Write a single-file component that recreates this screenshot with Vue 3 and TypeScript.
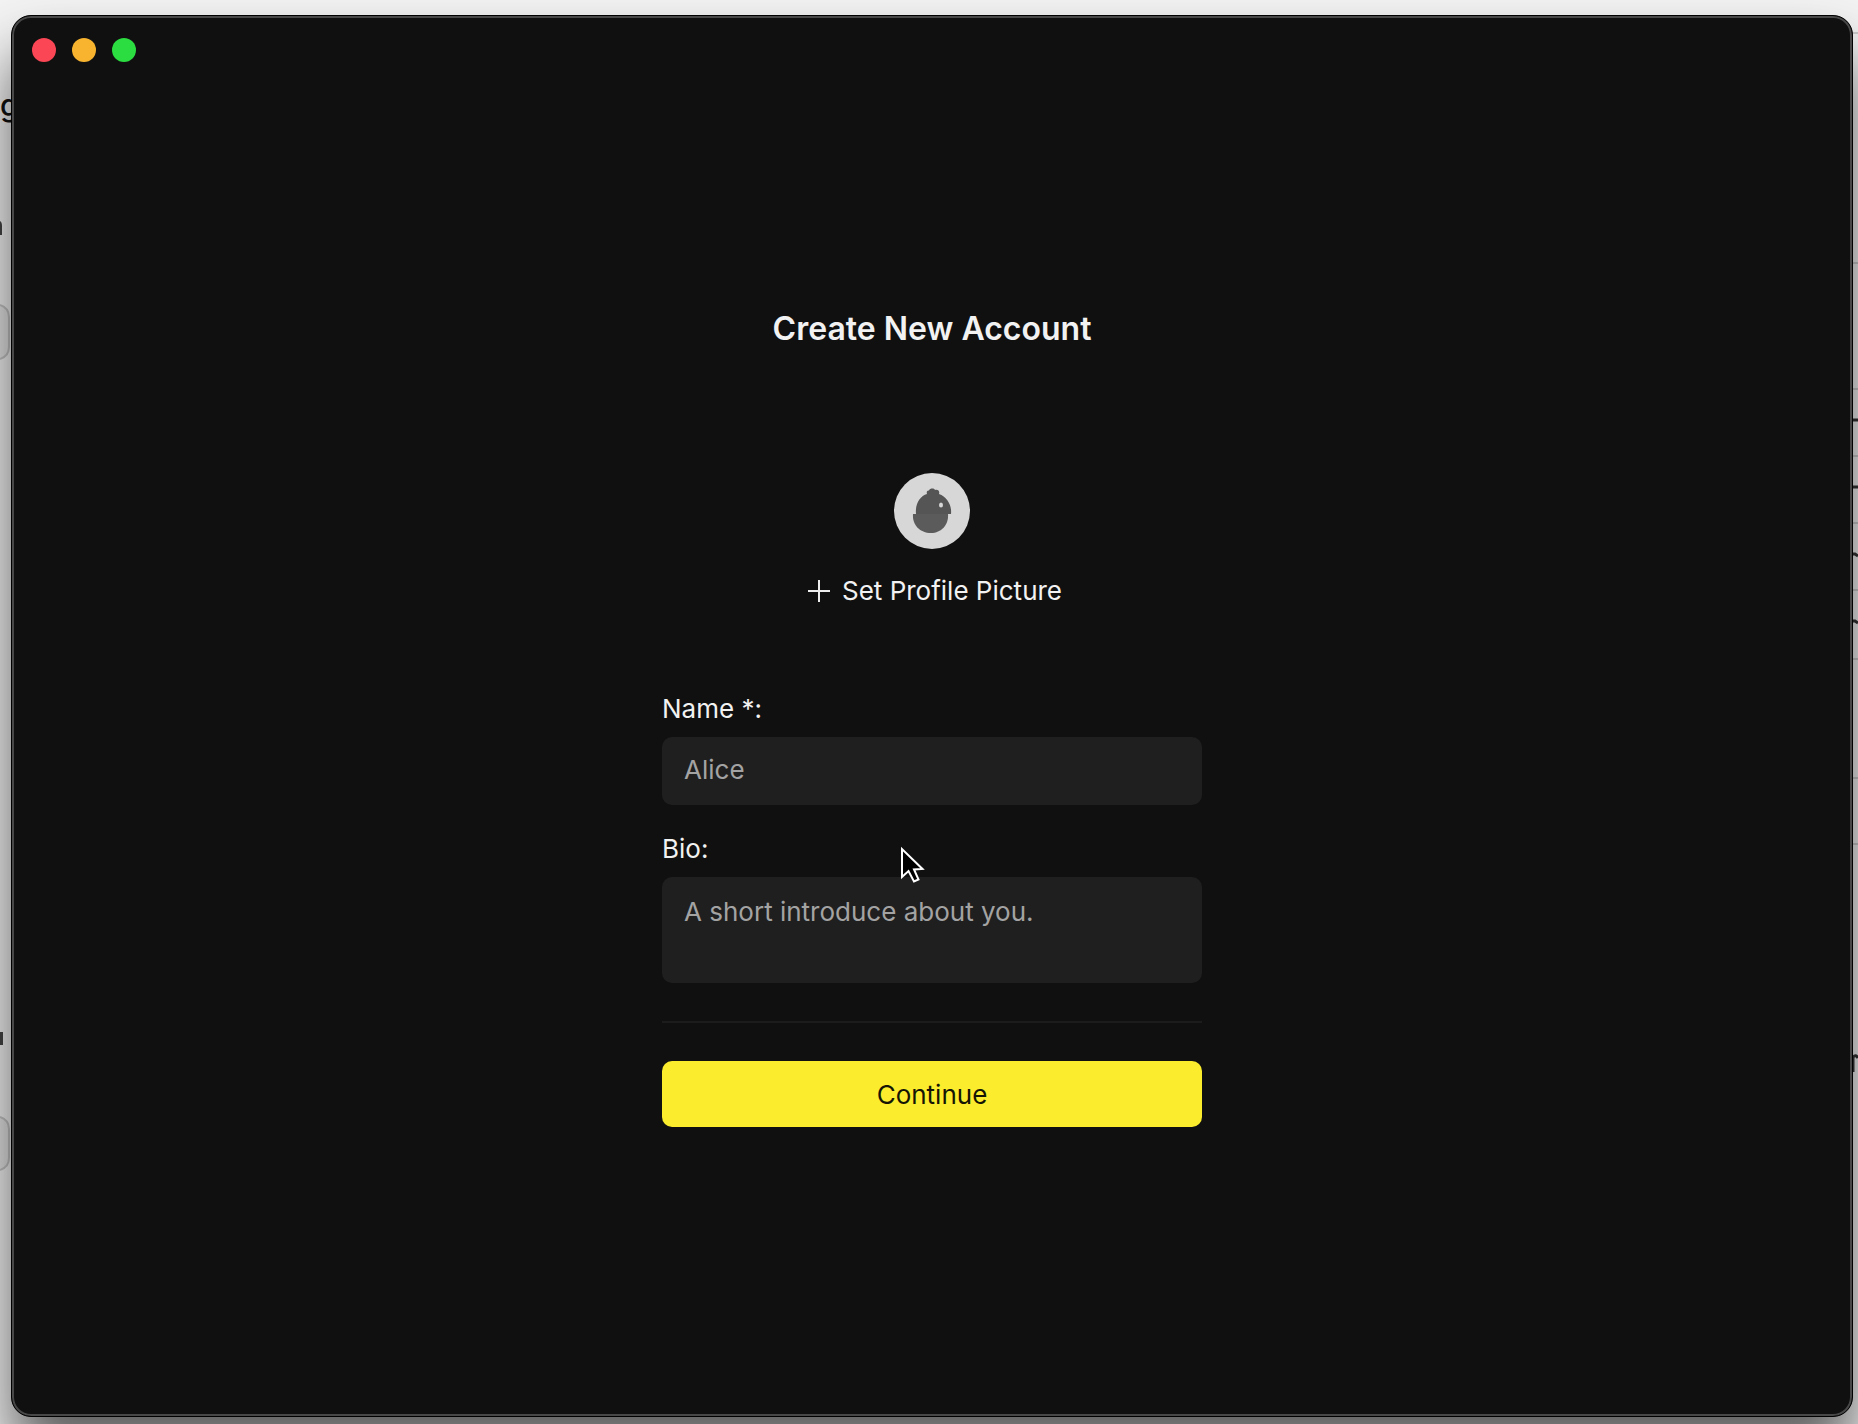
<script setup lang="ts">
import { ref } from 'vue'

const name = ref('')
const bio = ref('')
const lights: { label: string; tone: string }[] = [
  { label: 'Close', tone: 'close' },
  { label: 'Minimize', tone: 'minimize' },
  { label: 'Zoom', tone: 'zoom' },
]
const rules: number[] = [33, 263, 389, 456, 523, 590, 659, 778, 844]
const strokes: number[] = [420, 487]
const hooks: number[] = [554, 621]
</script>

<template>
  <div class="desktop">
    <svg class="behind left" width="20" height="1424" aria-hidden="true">
      <text x="0" y="116" font-size="30" font-weight="500" fill="#111">g</text>
      <path d="M0 221q2 1 2 5v9H0zM0 1032h3v13H0z" fill="#444" />
      <path d="M0 305q9 3 9 12v30q0 9-9 12M0 1117q9 3 9 12v29q0 9-9 12" fill="#e6e6e6" stroke="#c4c4c4" stroke-width="2" />
    </svg>
    <svg class="behind right" width="6" height="1424" aria-hidden="true">
      <path v-for="y in rules" :key="y" :d="`M0 ${y}h6`" stroke="#ccc" stroke-width="2" />
      <path v-for="y in strokes" :key="y" :d="`M0 ${y}h6`" stroke="#333" stroke-width="3" />
      <path v-for="y in hooks" :key="y" :d="`M0 ${y}h3l3 2`" fill="none" stroke="#333" stroke-width="3" />
      <path d="M1 1072v-15q3-3 5 1" fill="none" stroke="#333" stroke-width="3" />
    </svg>

    <main class="window">
      <header class="titlebar">
        <button v-for="l in lights" :key="l.tone" type="button" class="light" :class="l.tone" :aria-label="l.label"></button>
      </header>

      <form class="account" @submit.prevent>
        <h1>Create New Account</h1>
        <svg class="avatar" width="76" height="76" viewBox="0 0 76 76" role="img" aria-label="Profile picture">
          <circle cx="38" cy="38" r="38" fill="#d7d7d7" />
          <path d="M22 41C21 31 26 23 33 21C32 18 34 17 35 17.500C36 15 40 15 41 17C44 16 46 18 45 21C53 24 58 32 57 41Z" fill="#555" />
          <path d="M19 41H54C55 52 47 60 37 60C26 60 18 52 19 41Z" fill="#5b5b5b" />
          <ellipse cx="47" cy="32" rx="2" ry="2.500" fill="#d7d7d7" />
        </svg>
        <button type="button" class="picture">
          <svg width="22" height="22" viewBox="0 0 22 22" aria-hidden="true">
            <path d="M11 0V22M0 11H22" stroke="#eee" stroke-width="2" />
          </svg>
          Set Profile Picture
        </button>

        <label for="name">Name *:</label>
        <input id="name" v-model="name" type="text" placeholder="Alice" />
        <label for="bio">Bio:</label>
        <textarea id="bio" v-model="bio" placeholder="A short introduce about you."></textarea>
        <hr />
        <button type="submit" class="continue">Continue</button>
      </form>
    </main>

    <svg class="cursor" width="26" height="40" viewBox="0 0 26 40" aria-hidden="true">
      <path d="M2 3V31L8.500 25L14 35.500L18.500 33.500L14 23.500L22.500 23Z" fill="#000" stroke="#fff" stroke-width="2" />
    </svg>
  </div>
</template>

<style>
body {
  margin: 0;
}
</style>

<style scoped>
.desktop {
  position: relative;
  box-sizing: border-box;
  display: flex;
  min-height: 100vh;
  padding: 15px 5px 7px 11px;
  overflow: hidden;
  background: #f3f3f3;
  font-family: Inter, "Liberation Sans", sans-serif;
}

.behind {
  position: absolute;
  top: 0;
}

.left {
  left: 0;
}

.right {
  right: 0;
}

.window {
  position: relative;
  box-sizing: border-box;
  display: grid;
  grid-template-rows: 64px 1fr 61px;
  flex: 1;
  border: 1px solid #000;
  border-radius: 20px;
  background: #101010;
  box-shadow: inset 0 0 0 2px #484848, 0 40px 60px rgba(0, 0, 0, 0.62);
}

.titlebar {
  display: flex;
  gap: 16px;
  padding: 22px 20px;
}

.light {
  width: 24px;
  height: 24px;
  padding: 0;
  border: 0;
  border-radius: 50%;
}

.close {
  background: #fb4655;
}

.minimize {
  background: #f8b42e;
}

.zoom {
  background: #2bdd40;
}

.account {
  display: flex;
  flex-direction: column;
  justify-content: center;
  justify-self: center;
  width: 540px;
  color: #f2f2f2;
  font-size: 26px;
  line-height: 32px;
}

h1 {
  margin: 0 0 124px;
  font-size: 32px;
  font-weight: 600;
  line-height: 40px;
  text-align: center;
}

.avatar {
  align-self: center;
  margin-bottom: 26px;
}

.picture {
  display: flex;
  align-items: center;
  align-self: center;
  gap: 12px;
  margin-bottom: 86px;
  padding: 0 0 0 6px;
  border: 0;
  background: none;
  color: inherit;
  font: inherit;
}

label {
  margin-bottom: 12px;
}

input,
textarea {
  box-sizing: border-box;
  width: 100%;
  border: 0;
  border-radius: 10px;
  outline: 0;
  background: #1f1f1f;
  color: #f2f2f2;
  font: inherit;
}

input {
  height: 68px;
  margin-bottom: 28px;
  padding: 0 22px 2px;
}

textarea {
  height: 106px;
  padding: 19px 22px;
  resize: none;
}

::placeholder {
  color: #a3a3a3;
  opacity: 1;
}

hr {
  width: 100%;
  height: 2px;
  margin: 38px 0;
  border: 0;
  background: #1c1c1c;
}

.continue {
  height: 66px;
  padding: 2px 0 0;
  border: 0;
  border-radius: 10px;
  background: #fbed2d;
  color: #151505;
  font: inherit;
}

.cursor {
  position: absolute;
  top: 846px;
  left: 900px;
}
</style>
